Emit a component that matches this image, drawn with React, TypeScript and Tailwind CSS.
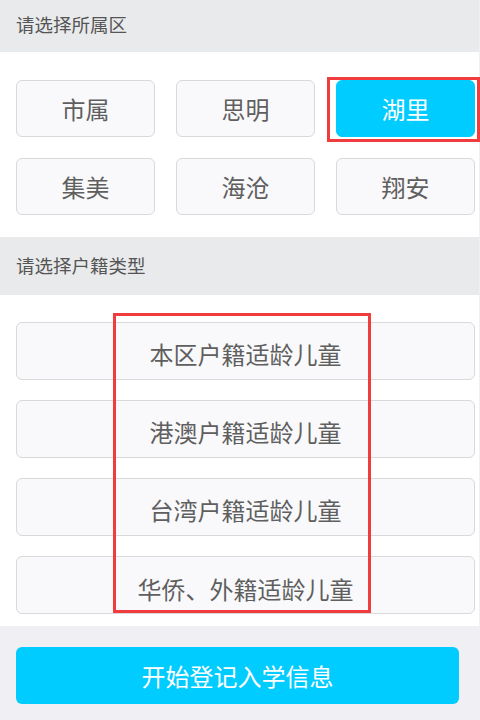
const regions = ['市属', '思明', '湖里', '集美', '海沧', '翔安'];
const types = ['本区户籍适龄儿童', '港澳户籍适龄儿童', '台湾户籍适龄儿童', '华侨、外籍适龄儿童'];

const App = () => {
  const selected = '湖里';

  return (
    <div
      className="relative w-[480px] h-[720px] overflow-hidden bg-[#efeff4]"
      style={{ fontFamily: '"Noto Sans CJK SC", "Noto Sans", sans-serif' }}
    >
      <div className="w-[479px]">
        <div className="h-[52px] bg-[#e9eaec] flex items-center pl-4 pb-[2px] text-[18.5px] text-[#555]">
          请选择所属区
        </div>

        <div className="bg-white pl-4 pr-[4px] pt-[28px] pb-[22px]">
          <div className="grid grid-cols-3 gap-x-[21px] gap-y-[21px]">
            {regions.map((r) => (
              <button
                key={r}
                className={
                  r === selected
                    ? 'h-[57px] rounded-[6px] bg-[#00ccff] text-white text-[24px] border border-[#00ccff]'
                    : 'h-[57px] rounded-[6px] bg-[#f9f9fb] text-[#5f5f5f] text-[24px] border border-[#d9d9dc]'
                }
              >
                {r}
              </button>
            ))}
          </div>
        </div>

        <div className="h-[58px] bg-[#e9eaec] flex items-center pl-4 text-[18.5px] text-[#555]">
          请选择户籍类型
        </div>

        <div className="bg-white pl-4 pr-[4px] pt-[27px] pb-[12px] flex flex-col gap-[20px]">
          {types.map((t, i) => (
            <button
              key={t}
              className={
                i === 3
                  ? 'h-[58px] rounded-[6px] bg-[#f9f9fb] text-[#5f5f5f] text-[24px] border border-[#d9d9dc] pt-[8px]'
                  : 'h-[58px] rounded-[6px] bg-[#f9f9fb] text-[#5f5f5f] text-[24px] border border-[#d9d9dc] pt-[6px]'
              }
            >
              {t}
            </button>
          ))}
        </div>

        <div className="pl-4 pr-[20px] pt-[21px]">
          <button className="w-full h-[57px] rounded-[6px] bg-[#00ccff] text-white text-[24px]">
            开始登记入学信息
          </button>
        </div>
      </div>

      <div className="absolute left-[327px] top-[77px] w-[153px] h-[65px] border-[3px] border-[#f03c3c]" />
      <div className="absolute left-[113px] top-[313px] w-[258px] h-[300px] border-[3px] border-[#f03c3c]" />
    </div>
  );
};

export default App;
